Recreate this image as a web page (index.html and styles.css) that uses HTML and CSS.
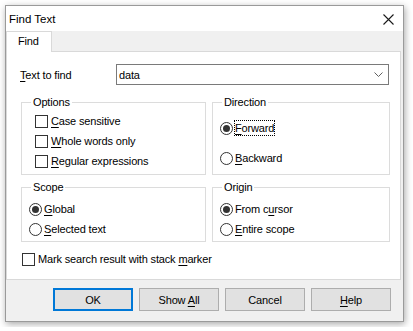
FILE: index.html
```html
<!DOCTYPE html>
<html>
<head>
<meta charset="utf-8">
<link rel="stylesheet" href="styles.css">
</head>
<body>
<div class="window">
  <div class="titlebar">
    <span class="title">Find Text</span>
    <span class="close">
      <svg width="11" height="11" viewBox="0 0 11 11"><path d="M0.5 0.5 L10.5 10.5 M10.5 0.5 L0.5 10.5" stroke="#1a1a1a" stroke-width="1.1" fill="none"/></svg>
    </span>
  </div>
  <div class="client">
    <div class="tabs"><div class="tab">Find</div></div>
    <div class="panel">
      <div class="find-row">
        <span class="find-label"><u>T</u>ext to find</span>
        <div class="combo">
          <span class="combo-text">data</span>
          <svg class="chevron" width="9" height="5" viewBox="0 0 9 5"><path d="M0.5 0.5 L4.5 4.5 L8.5 0.5" stroke="#606060" stroke-width="1" fill="none"/></svg>
        </div>
      </div>
      <div class="groups">
        <fieldset class="group options">
          <legend>Options</legend>
          <div class="opt"><span class="box"></span><span><u>C</u>ase sensitive</span></div>
          <div class="opt"><span class="box"></span><span><u>W</u>hole words only</span></div>
          <div class="opt"><span class="box"></span><span><u>R</u>egular expressions</span></div>
        </fieldset>
        <fieldset class="group direction">
          <legend>Direction</legend>
          <div class="opt"><span class="radio on"></span><span class="focus"><u>F</u>orward</span></div>
          <div class="opt"><span class="radio"></span><span><u>B</u>ackward</span></div>
        </fieldset>
        <fieldset class="group scope">
          <legend>Scope</legend>
          <div class="opt"><span class="radio on"></span><span><u>G</u>lobal</span></div>
          <div class="opt"><span class="radio"></span><span><u>S</u>elected text</span></div>
        </fieldset>
        <fieldset class="group origin">
          <legend>Origin</legend>
          <div class="opt"><span class="radio on"></span><span>From c<u>u</u>rsor</span></div>
          <div class="opt"><span class="radio"></span><span><u>E</u>ntire scope</span></div>
        </fieldset>
      </div>
      <div class="opt mark"><span class="box"></span><span>Mark search result with stack <u>m</u>arker</span></div>
    </div>
    <div class="buttons">
      <div class="btn default"><span>OK</span></div>
      <div class="btn"><span>Show <u>A</u>ll</span></div>
      <div class="btn"><span>Cancel</span></div>
      <div class="btn"><span><u>H</u>elp</span></div>
    </div>
  </div>
</div>
</body>
</html>
```
FILE: styles.css
```css
html, body {
  margin: 0;
  background: #ffffff;
}
body {
  padding: 5px;
  font-family: "Liberation Sans", Arial, sans-serif;
  font-size: 11px;
  letter-spacing: -0.15px;
  color: #000;
}
u {
  text-decoration: underline;
  text-underline-offset: 2px;
}
.window {
  box-sizing: border-box;
  width: 399px;
  height: 317px;
  border: 1px solid #9a9a9a;
  background: #f0f0f0;
  box-shadow: 1px 2px 7px rgba(0, 0, 0, 0.35);
  display: flex;
  flex-direction: column;
}
.titlebar {
  height: 25px;
  background: #ffffff;
  display: flex;
  align-items: center;
  padding: 0 9px 0 3px;
}
.title {
  font-size: 11.5px;
  letter-spacing: 0;
  line-height: 16px;
}
.close {
  margin-left: auto;
  display: flex;
  margin-top: 1px;
}
.client {
  flex: 1;
  display: flex;
  flex-direction: column;
  padding-right: 2px;
}
.tabs {
  height: 20px;
  display: flex;
}
.tab {
  box-sizing: border-box;
  width: 46px;
  height: 21px;
  background: #ffffff;
  border: 1px solid #d9d9d9;
  border-bottom: none;
  padding-left: 11px;
  line-height: 19px;
  position: relative;
  z-index: 1;
}
.panel {
  box-sizing: border-box;
  height: 229px;
  background: #ffffff;
  border: 1px solid #d9d9d9;
  padding: 12px 10px 9px 14px;
  display: flex;
  flex-direction: column;
}
.find-row {
  display: flex;
  align-items: center;
  height: 21px;
}
.find-label {
  width: 96px;
  margin-left: -1px;
}
.combo {
  box-sizing: border-box;
  width: 273px;
  height: 21px;
  border: 1px solid #7a7a7a;
  display: flex;
  align-items: center;
  padding: 0 5px 0 2px;
}
.combo-text {
  flex: 1;
}
.groups {
  margin-top: 9px;
  display: grid;
  grid-template-columns: 185px 178px;
  grid-template-rows: 81px 63px;
  column-gap: 6px;
  row-gap: 4px;
}
.group {
  box-sizing: border-box;
  margin: 0;
  min-width: 0;
  border: 1px solid #dcdcdc;
  padding: 0 0 0 9px;
}
.group legend {
  padding: 0 2px;
  line-height: 16px;
}
.opt {
  display: flex;
  align-items: center;
  height: 20px;
}
.options .opt {
  margin-left: 4px;
}
.options legend + .opt {
  margin-top: 1px;
}
.direction .opt,
.scope .opt,
.origin .opt {
  margin-left: -2px;
}
.direction legend + .opt {
  margin-top: 8px;
}
.direction .opt + .opt {
  margin-top: 10px;
}
.scope legend + .opt,
.origin legend + .opt {
  margin-top: 4px;
}
.box {
  box-sizing: border-box;
  width: 13px;
  height: 13px;
  border: 1px solid #333333;
  background: #ffffff;
  margin-right: 3px;
  flex: none;
}
.radio {
  box-sizing: border-box;
  width: 13px;
  height: 13px;
  border: 1px solid #333333;
  border-radius: 50%;
  background: #ffffff;
  margin-right: 2px;
  flex: none;
  display: flex;
  align-items: center;
  justify-content: center;
}
.radio.on::after {
  content: "";
  width: 7px;
  height: 7px;
  border-radius: 50%;
  background: #333333;
}
.focus {
  outline: 1px dotted #000;
  outline-offset: 0;
  line-height: 14px;
}
.mark {
  margin-top: 7px;
  margin-left: -13px;
  margin-right: -10px;
}
.mark .box {
  margin-left: 14px;
}
.buttons {
  flex: 1;
  display: flex;
  justify-content: flex-end;
  align-items: flex-start;
  gap: 6px;
  padding: 8px 10px 0 0;
}
.btn {
  box-sizing: border-box;
  width: 80px;
  height: 23px;
  background: #e1e1e1;
  border: 1px solid #adadad;
  display: flex;
  align-items: center;
  justify-content: center;
}
.btn.default {
  border: 2px solid #0078d7;
}
```
